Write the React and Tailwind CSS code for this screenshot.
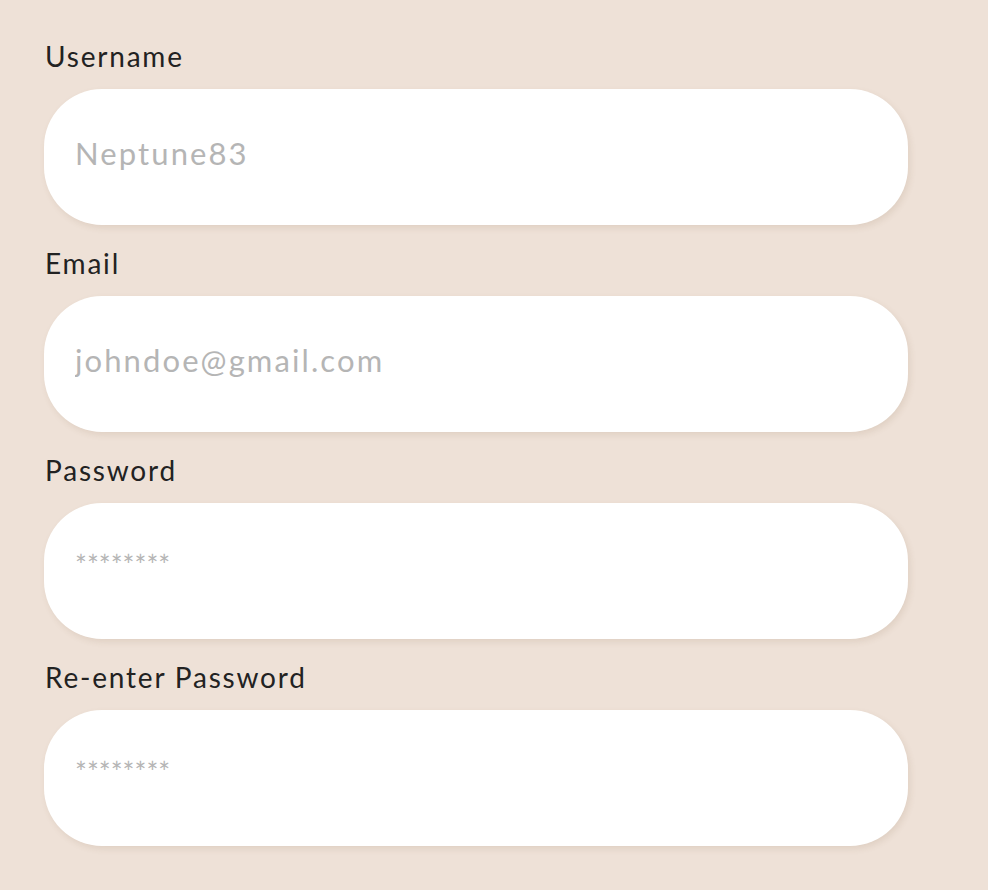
import { useState } from 'react'

const fields = [
  { label: 'Username', name: 'username', type: 'text', placeholder: 'Neptune83' },
  { label: 'Email', name: 'email', type: 'email', placeholder: 'johndoe@gmail.com' },
  { label: 'Password', name: 'password', type: 'password', placeholder: '********' },
  { label: 'Re-enter Password', name: 'confirm', type: 'password', placeholder: '********' },
]

function Field({ label, name, type, placeholder, value, onChange }) {
  const isPassword = type === 'password'
  return (
    <div className="flex flex-col">
      <label htmlFor={name} className="text-[28px] leading-[32px] text-[#222] tracking-[1.8px] pl-px">
        {label}
      </label>
      <input
        id={name}
        type={type}
        value={value}
        onChange={e => onChange(name, e.target.value)}
        placeholder={placeholder}
        className={
          'mt-[17px] w-[864px] h-[136px] rounded-[58px] bg-white px-[31px] text-[#222] placeholder:text-[#b5b5b5] shadow-[2px_3px_6px_rgba(120,90,60,0.12)] focus:outline-none ' +
          (isPassword ? 'text-[28px] pb-[12px] tracking-[0px]' : 'text-[31px] pb-[8px] tracking-[2.1px]')
        }
      />
    </div>
  )
}

export default function App() {
  const [form, setForm] = useState({ username: '', email: '', password: '', confirm: '' })

  function handleChange(name, value) {
    setForm(f => ({ ...f, [name]: value }))
  }

  return (
    <div className="min-h-screen bg-[#eee1d7] px-[44px] pt-[40px] pb-10" style={{ fontFamily: 'Lato, "Liberation Sans", sans-serif' }}>
      <div className="flex flex-col gap-[22px]">
        {fields.map(f => (
          <Field key={f.name} {...f} value={form[f.name]} onChange={handleChange} />
        ))}
      </div>
    </div>
  )
}
